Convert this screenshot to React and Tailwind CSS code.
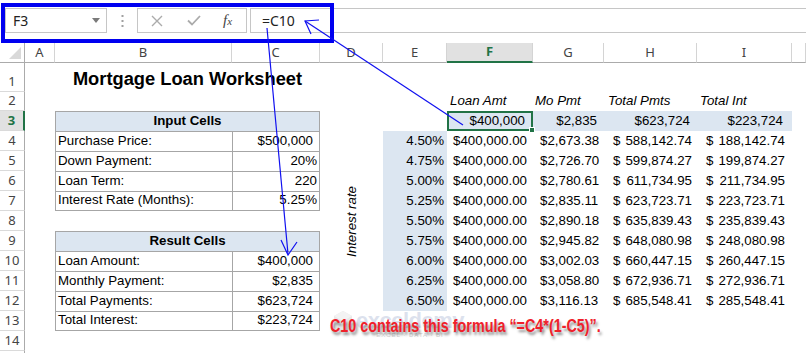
import React from 'react';

const rates = [
  ['4.50%', '2,673.38', '588,142.74', '188,142.74'],
  ['4.75%', '2,726.70', '599,874.27', '199,874.27'],
  ['5.00%', '2,780.61', '611,734.95', '211,734.95'],
  ['5.25%', '2,835.11', '623,723.71', '223,723.71'],
  ['5.50%', '2,890.18', '635,839.43', '235,839.43'],
  ['5.75%', '2,945.82', '648,080.98', '248,080.98'],
  ['6.00%', '3,002.03', '660,447.15', '260,447.15'],
  ['6.25%', '3,058.80', '672,936.71', '272,936.71'],
  ['6.50%', '3,116.13', '685,548.41', '285,548.41'],
];

const inputRows = [
  ['Purchase Price:', '$500,000', true],
  ['Down Payment:', '20%', false],
  ['Loan Term:', '220', false],
  ['Interest Rate (Months):', '5.25%', false],
];

const resultRows = [
  ['Loan Amount:', '$400,000'],
  ['Monthly Payment:', '$2,835'],
  ['Total Payments:', '$623,724'],
  ['Total Interest:', '$223,724'],
];

const cell = 'flex items-end pb-[2px] leading-[16px] whitespace-nowrap';

const RowHead = ({ n, active }) => (
  active ? (
    <div className="flex items-end justify-center border-r-2 border-b border-r-[#217346] border-b-[#dadada] bg-[#e1e1e1] pb-[2px] font-['Noto_Sans',sans-serif] text-[13px] leading-[16px] font-bold text-[#217346]">{n}</div>
  ) : (
    <div className="flex items-end justify-center border-r border-b border-r-[#ababab] border-b-[#dadada] pb-[2px] font-['Noto_Sans',sans-serif] text-[13px] leading-[16px] text-[#444]">{n}</div>
  )
);

const ColHead = ({ children, active }) => (
  active ? (
    <div className="flex items-center justify-center border-r border-b-2 border-r-[#d4d4d4] border-b-[#217346] bg-[#e1e1e1] font-['Noto_Sans',sans-serif] text-[13px] font-bold text-[#217346]">{children}</div>
  ) : (
    <div className="flex items-center justify-center border-r border-b border-r-[#d4d4d4] border-b-[#ababab] font-['Noto_Sans',sans-serif] text-[13px] text-[#444]">{children}</div>
  )
);

const Empty = () => <div />;

const Label = ({ children, last }) => (
  <div className={`${cell} border-t border-l border-[#a6a6a6] pl-[2px] ${last ? 'border-b' : ''}`}>{children}</div>
);

const Value = ({ children, money, last }) => (
  <div className={`${cell} justify-end border-t border-x border-[#a6a6a6] ${money ? 'pr-[6px]' : 'pr-[2px]'} ${last ? 'border-b' : ''}`}>{children}</div>
);

const TableHead = ({ children }) => (
  <div className={`${cell} col-span-2 justify-center border-t border-x border-[#a6a6a6] bg-[#dce6f1] font-bold`}>{children}</div>
);

const RateCells = ({ r }) => (
  <>
    <div className={`${cell} justify-end bg-[#dce6f1] pr-[3px]`}>{r[0]}</div>
    <div className={`${cell} justify-end pr-[6px]`}>$400,000.00</div>
    <div className={`${cell} justify-between pl-[7px] pr-[6px]`}><span>$</span><span>{r[1]}</span></div>
    <div className={`${cell} justify-between pl-[9px] pr-[5px]`}><span>$</span><span>{r[2]}</span></div>
    <div className={`${cell} justify-between pl-[9px] pr-[7px]`}><span>$</span><span>{r[3]}</span></div>
    <Empty />
  </>
);

const FormulaBar = () => (
  <div className="flex h-[43px] items-start pt-[8px] pl-[5px] font-['Noto_Sans',sans-serif] text-[14px] text-[#222]">
    <div className="flex h-[25px] w-[102px] items-center justify-between border border-[#c6c6c6] pl-[7px] pr-[6px]">
      <span>F3</span>
      <svg width="8" height="5" viewBox="0 0 8 5"><path d="M0 0h8L4 5z" fill="#7a7a7a" /></svg>
    </div>
    <div className="flex h-[25px] w-[30px] items-center justify-center">
      <svg width="3" height="12" viewBox="0 0 3 12">
        <rect x="0.5" y="0" width="2" height="2" fill="#a0a0a0" />
        <rect x="0.5" y="5" width="2" height="2" fill="#a0a0a0" />
        <rect x="0.5" y="10" width="2" height="2" fill="#a0a0a0" />
      </svg>
    </div>
    <div className="flex h-[25px] w-[110px] items-center border border-[#c6c6c6] pl-[13px]">
      <svg width="12" height="12" viewBox="0 0 12 12"><path d="M1 1l10 10M11 1L1 11" stroke="#ababab" strokeWidth="1.4" /></svg>
      <svg className="ml-[24px]" width="14" height="11" viewBox="0 0 14 11"><path d="M1 5.5l4 4L13 1" stroke="#ababab" strokeWidth="1.8" fill="none" /></svg>
      <span className="ml-[22px] font-['Liberation_Serif',serif] text-[15px] italic text-[#444]">f<span className="text-[11px]">x</span></span>
    </div>
    <div className="ml-[3px] flex h-[25px] flex-1 items-center border-y border-l border-[#c6c6c6] pl-[11px]">=C10</div>
  </div>
);

const Overlay = () => (
  <>
    <div className="pointer-events-none absolute top-[3px] left-[1px] h-[40px] w-[333px] border-4 border-[#0000f0]" />
    <svg className="pointer-events-none absolute top-0 left-0" width="806" height="353" viewBox="0 0 806 353">
      <g stroke="#1010f0" strokeWidth="1.2" fill="none">
        <path d="M267 28L288 254" />
        <path d="M281 240L288 255L297 242" />
        <path d="M463 125L305 21" />
        <path d="M319 20L305 21L311 34" />
      </g>
    </svg>
    <div className="pointer-events-none absolute top-[310px] left-[333px] flex items-start opacity-40">
      <svg width="20" height="24" viewBox="0 0 20 24">
        <path d="M10 1l9 5v12l-9 5-9-5V6z" fill="#c9c9c9" />
        <path d="M10 1l9 5-9 5-9-5z" fill="#e2e2e2" />
      </svg>
      <div className="ml-[3px] flex flex-col items-center">
        <span className="font-['Liberation_Sans',sans-serif] text-[22px] leading-[22px] font-bold tracking-[-0.5px] text-[#aab6d4]">exceldemy</span>
        <span className="font-['Liberation_Sans',sans-serif] text-[6px] leading-[7px] tracking-[1px] text-[#888]">EXCEL · DATA · BI</span>
      </div>
    </div>
    <div className="pointer-events-none absolute top-[316px] left-[330px] origin-left scale-x-[0.82] whitespace-nowrap font-['Liberation_Sans',sans-serif] text-[17.5px] leading-[20px] font-bold text-[#f0202a] [text-shadow:2px_3px_3px_rgba(0,0,0,0.45)]">
      C10 contains this formula “=C4*(1-C5)”.
    </div>
  </>
);

export default function App() {
  return (
    <div className="relative h-[353px] w-[806px] overflow-hidden bg-white">
      <FormulaBar />
      <div className="grid grid-cols-[25px_30px_177px_88px_63px_64px_86px_71px_93px_95px_1fr] grid-rows-[20px_29px_19px_repeat(13,20px)] font-['Liberation_Sans',sans-serif] text-[13.3px] text-black">
        {/* column headers */}
        <div className="relative border-r border-b border-r-[#ababab] border-b-[#ababab]">
          <svg className="absolute right-[3px] bottom-[3px]" width="12" height="12" viewBox="0 0 12 12"><path d="M12 0V12H0z" fill="#d9d9d9" /></svg>
        </div>
        <ColHead>A</ColHead>
        <ColHead>B</ColHead>
        <ColHead>C</ColHead>
        <ColHead>D</ColHead>
        <ColHead>E</ColHead>
        <ColHead active>F</ColHead>
        <ColHead>G</ColHead>
        <ColHead>H</ColHead>
        <ColHead>I</ColHead>
        <ColHead />

        {/* row 1 */}
        <RowHead n={1} />
        <Empty />
        <div className="col-span-2 flex items-end justify-center pb-[2px] text-[18.3px] leading-[22px] font-bold">Mortgage Loan Worksheet</div>
        <Empty /><Empty /><Empty /><Empty /><Empty /><Empty /><Empty />

        {/* row 2 */}
        <RowHead n={2} />
        <Empty /><Empty /><Empty /><Empty /><Empty />
        <div className={`${cell} pl-[3px] italic`}>Loan Amt</div>
        <div className={`${cell} pl-[2px] italic`}>Mo Pmt</div>
        <div className={`${cell} pl-[4px] italic`}>Total Pmts</div>
        <div className={`${cell} pl-[3px] italic`}>Total Int</div>
        <Empty />

        {/* row 3 */}
        <RowHead n={3} active />
        <Empty />
        <TableHead>Input Cells</TableHead>
        <Empty /><Empty />
        <div className="relative flex items-end justify-end border-2 border-[#217346] bg-[#dce6f1] pr-[6px] leading-[16px] whitespace-nowrap">
          $400,000
          <div className="absolute -right-[4px] -bottom-[4px] h-[6px] w-[6px] border border-white bg-[#217346]" />
        </div>
        <div className={`${cell} justify-end bg-[#dce6f1] pr-[7px]`}>$2,835</div>
        <div className={`${cell} justify-end bg-[#dce6f1] pr-[7px]`}>$623,724</div>
        <div className={`${cell} justify-end bg-[#dce6f1] pr-[9px]`}>$223,724</div>
        <Empty />

        {/* rows 4-7 */}
        {inputRows.map(([label, value, money], i) => (
          <React.Fragment key={label}>
            <RowHead n={4 + i} />
            <Empty />
            <Label last={i === 3}>{label}</Label>
            <Value money={money} last={i === 3}>{value}</Value>
            {i === 0 && (
              <div className="row-span-9 flex items-center justify-center">
                <span className="rotate-180 whitespace-nowrap italic [writing-mode:vertical-rl]">Interest rate</span>
              </div>
            )}
            <RateCells r={rates[i]} />
          </React.Fragment>
        ))}

        {/* row 8 */}
        <RowHead n={8} />
        <Empty /><Empty /><Empty />
        <RateCells r={rates[4]} />

        {/* row 9 */}
        <RowHead n={9} />
        <Empty />
        <TableHead>Result Cells</TableHead>
        <RateCells r={rates[5]} />

        {/* rows 10-13 */}
        {resultRows.map(([label, value], i) => (
          <React.Fragment key={label}>
            <RowHead n={10 + i} />
            <Empty />
            <Label last={i === 3}>{label}</Label>
            <Value money last={i === 3}>{value}</Value>
            {i < 3 ? (
              <RateCells r={rates[6 + i]} />
            ) : (
              <><Empty /><Empty /><Empty /><Empty /><Empty /><Empty /><Empty /></>
            )}
          </React.Fragment>
        ))}

        {/* row 14-15 */}
        <RowHead n={14} />
        <Empty /><Empty /><Empty /><Empty /><Empty /><Empty /><Empty /><Empty /><Empty /><Empty />
        <RowHead n="" />
      </div>
      <Overlay />
    </div>
  );
}
